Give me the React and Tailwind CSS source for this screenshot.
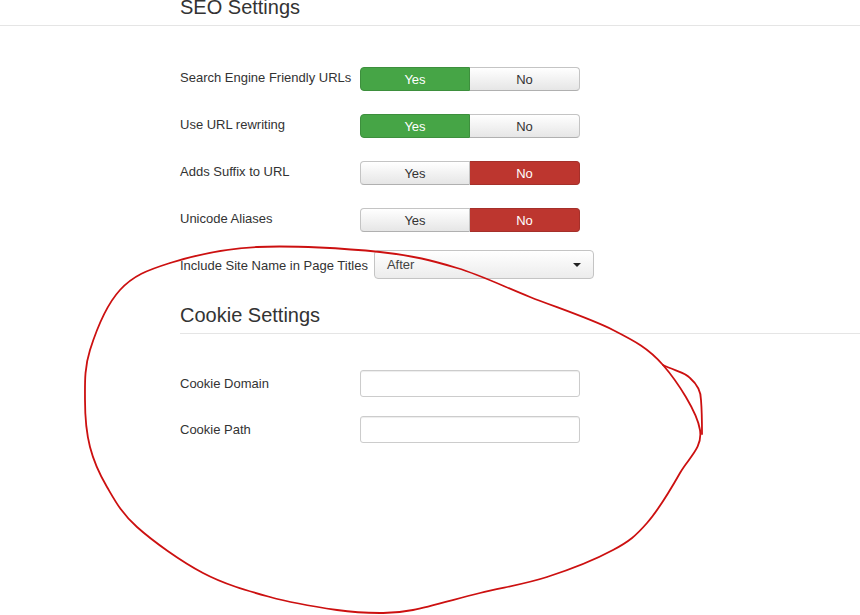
import React from 'react';

// 切替ボタン（Yes / No）
const YesNo = ({ value }) => {
  const yesActive = value === 'yes';
  const base = 'w-[110px] h-[24px] text-[13px] leading-[23px] text-center border';
  const idle = 'bg-gradient-to-b from-[#ffffff] to-[#e6e6e6] border-[#c4c4c4] border-b-[#b0b0b0] text-[#333]';
  return (
    <div className="flex w-[220px]">
      <div
        className={`${base} rounded-l-[4px] ${
          yesActive ? 'bg-[#46a546] border-[#3d8f3d] text-white' : idle
        }`}
      >
        Yes
      </div>
      <div
        className={`${base} rounded-r-[4px] border-l-0 ${
          yesActive ? idle : 'bg-[#bd362f] border-[#a5302a] text-white'
        }`}
      >
        No
      </div>
    </div>
  );
};

const Row = ({ label, children, className = '' }) => (
  <div className={`flex items-start ${className}`}>
    <div className="min-w-[175px] mr-[5px] pt-[2px] text-[13px] leading-[18px] text-[#333]">{label}</div>
    {children}
  </div>
);

const TextInput = () => (
  <div className="w-[220px] h-[27px] bg-white border border-[#cccccc] rounded-[3px] shadow-[inset_0_1px_1px_rgba(0,0,0,0.075)]" />
);

// 手書きの線：点列から滑らかな閉曲線を作る
const loopPoints = [
  [170, 263], [257, 247], [380, 252], [457, 268], [530, 297], [613, 330],
  [663, 365], [700, 430], [680, 473], [647, 523], [613, 550], [547, 577],
  [480, 593], [413, 610], [380, 613], [337, 610], [270, 597], [203, 573],
  [137, 527], [107, 487], [90, 447], [85, 400], [90, 350], [120, 290],
];

const smoothClosed = (pts) => {
  const n = pts.length;
  let d = `M ${pts[0][0]} ${pts[0][1]}`;
  for (let i = 0; i < n; i++) {
    const p0 = pts[(i - 1 + n) % n];
    const p1 = pts[i];
    const p2 = pts[(i + 1) % n];
    const p3 = pts[(i + 2) % n];
    const c1 = [p1[0] + (p2[0] - p0[0]) / 6, p1[1] + (p2[1] - p0[1]) / 6];
    const c2 = [p2[0] - (p3[0] - p1[0]) / 6, p2[1] - (p3[1] - p1[1]) / 6];
    d += ` C ${c1[0].toFixed(1)} ${c1[1].toFixed(1)} ${c2[0].toFixed(1)} ${c2[1].toFixed(1)} ${p2[0]} ${p2[1]}`;
  }
  return d;
};

const App = () => {
  return (
    <div
      className="relative w-[860px] h-[615px] overflow-hidden bg-white"
      style={{ fontFamily: '"Liberation Sans", Arial, sans-serif' }}
    >
      {/* SEO Settings */}
      <div className="border-b border-[#e5e5e5] pl-[180px] pb-[8px]">
        <h2 className="-mt-[3px] text-[20px] leading-[20px] text-[#333]">SEO Settings</h2>
      </div>

      <div className="pl-[180px] pt-[41px]">
        <Row label="Search Engine Friendly URLs">
          <YesNo value="yes" />
        </Row>
        <Row label="Use URL rewriting" className="mt-[23px]">
          <YesNo value="yes" />
        </Row>
        <Row label="Adds Suffix to URL" className="mt-[23px]">
          <YesNo value="no" />
        </Row>
        <Row label="Unicode Aliases" className="mt-[23px]">
          <YesNo value="no" />
        </Row>
        <div className="flex items-start mt-[18px]">
          <div className="mr-[6px] pt-[7px] text-[13px] leading-[18px] text-[#333]">
            Include Site Name in Page Titles
          </div>
          <div className="flex items-center justify-between w-[220px] h-[29px] pl-[12px] pr-[12px] border border-[#c4c4c4] rounded-[4px] bg-gradient-to-b from-[#ffffff] to-[#ececec] text-[13px] text-[#444]">
            <span>After</span>
            <span className="w-0 h-0 border-l-[4px] border-r-[4px] border-t-[4px] border-l-transparent border-r-transparent border-t-[#222]" />
          </div>
        </div>
      </div>

      {/* Cookie Settings */}
      <div className="ml-[180px] mt-[26px] border-b border-[#e5e5e5] pb-[8px]">
        <h2 className="text-[20px] leading-[20px] text-[#333]">Cookie Settings</h2>
      </div>

      <div className="pl-[180px] pt-[36px]">
        <div className="flex items-center">
          <div className="w-[180px] text-[13px] text-[#333]">Cookie Domain</div>
          <TextInput />
        </div>
        <div className="flex items-center mt-[19px]">
          <div className="w-[180px] text-[13px] text-[#333]">Cookie Path</div>
          <TextInput />
        </div>
      </div>

      {/* 手書きの赤い丸 */}
      <svg
        className="absolute top-0 left-0 pointer-events-none"
        width="860"
        height="615"
        viewBox="0 0 860 615"
        fill="none"
      >
        <path d={smoothClosed(loopPoints)} stroke="#cc1010" strokeWidth="1.8" strokeLinecap="round" />
        <path
          d="M 663 365 C 675 371 685 372 690 378 C 698 385 701 392 701 400 C 702 412 702 422 702 434"
          stroke="#cc1010"
          strokeWidth="1.8"
          strokeLinecap="round"
        />
      </svg>
    </div>
  );
};

export default App;
